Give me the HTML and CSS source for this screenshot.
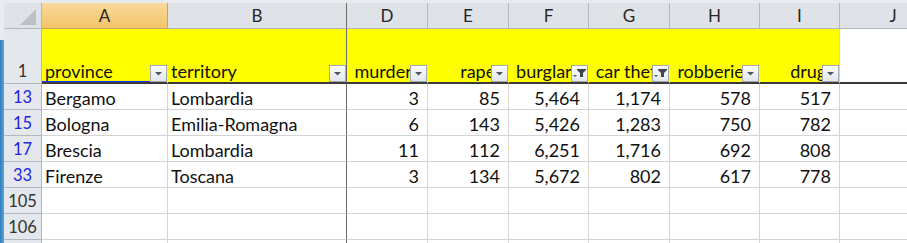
FILE: index.html
```html
<!DOCTYPE html>
<html>
<head>
<meta charset="utf-8">
<link rel="stylesheet" href="styles.css">
</head>
<body>
<div class="sheet">
  <div class="grid">
    <div class="corner"><svg width="37" height="25" viewBox="0 0 37 25"><polygon points="32,6 32,22 16,22" fill="#bcc1c7"/></svg></div>
    <div class="ch sel">A</div>
    <div class="ch fz">B</div>
    <div class="ch">D</div>
    <div class="ch">E</div>
    <div class="ch">F</div>
    <div class="ch">G</div>
    <div class="ch">H</div>
    <div class="ch">I</div>
    <div class="ch">J</div>

    <div class="rh r1">1</div>
    <div class="hc y t act"><span>province</span><span class="fb"><svg width="15" height="15" viewBox="0 0 15 15"><polygon points="4,6 11,6 7.5,9.5" fill="#4d5560"/></svg></span></div>
    <div class="hc y t fz"><span>territory</span><span class="fb"><svg width="15" height="15" viewBox="0 0 15 15"><polygon points="4,6 11,6 7.5,9.5" fill="#4d5560"/></svg></span></div>
    <div class="hc y c"><span>murders</span><span class="fb"><svg width="15" height="15" viewBox="0 0 15 15"><polygon points="4,6 11,6 7.5,9.5" fill="#4d5560"/></svg></span></div>
    <div class="hc y r"><span>rapes</span><span class="fb"><svg width="15" height="15" viewBox="0 0 15 15"><polygon points="4,6 11,6 7.5,9.5" fill="#4d5560"/></svg></span></div>
    <div class="hc y c"><span>burglary</span><span class="fb"><svg width="15" height="15" viewBox="0 0 15 15"><polygon points="5,3 14,3 14,4 11,7 11,11 8,11 8,7 5,4" fill="#3f4650"/><polygon points="1,9 5,9 3,11" fill="#555c66"/></svg></span></div>
    <div class="hc y c"><span>car theft</span><span class="fb"><svg width="15" height="15" viewBox="0 0 15 15"><polygon points="5,3 14,3 14,4 11,7 11,11 8,11 8,7 5,4" fill="#3f4650"/><polygon points="1,9 5,9 3,11" fill="#555c66"/></svg></span></div>
    <div class="hc y c"><span>robberies</span><span class="fb"><svg width="15" height="15" viewBox="0 0 15 15"><polygon points="4,6 11,6 7.5,9.5" fill="#4d5560"/></svg></span></div>
    <div class="hc y r last"><span>drugs</span><span class="fb"><svg width="15" height="15" viewBox="0 0 15 15"><polygon points="4,6 11,6 7.5,9.5" fill="#4d5560"/></svg></span></div>
    <div class="hc"></div>

    <div class="rh f">13</div><div class="d t">Bergamo</div><div class="d t fz">Lombardia</div><div class="d n">3</div><div class="d n">85</div><div class="d n">5,464</div><div class="d n">1,174</div><div class="d n">578</div><div class="d n">517</div><div class="d"></div>
    <div class="rh f">15</div><div class="d t">Bologna</div><div class="d t fz">Emilia-Romagna</div><div class="d n">6</div><div class="d n">143</div><div class="d n">5,426</div><div class="d n">1,283</div><div class="d n">750</div><div class="d n">782</div><div class="d"></div>
    <div class="rh f">17</div><div class="d t">Brescia</div><div class="d t fz">Lombardia</div><div class="d n">11</div><div class="d n">112</div><div class="d n">6,251</div><div class="d n">1,716</div><div class="d n">692</div><div class="d n">808</div><div class="d"></div>
    <div class="rh f">33</div><div class="d t">Firenze</div><div class="d t fz">Toscana</div><div class="d n">3</div><div class="d n">134</div><div class="d n">5,672</div><div class="d n">802</div><div class="d n">617</div><div class="d n">778</div><div class="d"></div>
    <div class="rh">105</div><div class="d"></div><div class="d fz"></div><div class="d"></div><div class="d"></div><div class="d"></div><div class="d"></div><div class="d"></div><div class="d"></div><div class="d"></div>
    <div class="rh">106</div><div class="d"></div><div class="d fz"></div><div class="d"></div><div class="d"></div><div class="d"></div><div class="d"></div><div class="d"></div><div class="d"></div><div class="d"></div>
    <div class="rh"></div><div class="d"></div><div class="d fz"></div><div class="d"></div><div class="d"></div><div class="d"></div><div class="d"></div><div class="d"></div><div class="d"></div><div class="d"></div>
  </div>
</div>
</body>
</html>
```
FILE: styles.css
```css
html, body {
  margin: 0;
  padding: 0;
  background: #ffffff;
  overflow: hidden;
}
body {
  font-family: Lato, "Open Sans", sans-serif;
  width: 907px;
  height: 243px;
}
.sheet {
  padding: 3px 0 0 4px;
  width: 903px;
  height: 240px;
  overflow: hidden;
  background:
    linear-gradient(90deg, #2f7dbd, #5ea6da) no-repeat 0 40px / 4px 100%,
    #e8ebef;
}
.grid {
  display: grid;
  grid-template-columns: 38px 126px 179px 81px 81px 80px 81px 90px 80px 107px;
  grid-template-rows: 26px 55px repeat(6, 26px) 4px;
  background: #ffffff;
}
.grid > div {
  box-sizing: border-box;
  border-right: 1px solid #d4d4d4;
  border-bottom: 1px solid #d4d4d4;
  overflow: hidden;
  white-space: nowrap;
  display: flex;
  align-items: flex-end;
  line-height: 22px;
}
.grid > .corner {
  background: #dfe3e8;
  border-color: #b1b7bf;
  align-items: stretch;
}
.corner svg { display: block; }
.grid > .ch {
  background: #dfe3e8;
  border-right-color: #b1b7bf;
  border-bottom-color: #b1b7bf;
  justify-content: center;
  align-items: center;
  font-size: 17px;
  color: #262626;
  padding-top: 1px;
}
.grid > .ch.sel {
  background: linear-gradient(#f9da9c, #f3c467);
  border-right-color: #c9a264;
  border-bottom-color: #c9a264;
}
.grid > .rh {
  background: #e4e7eb;
  border-right-color: #b1b7bf;
  border-bottom-color: #b1b7bf;
  justify-content: center;
  font-size: 16.5px;
  color: #333333;
  padding-bottom: 1px;
}
.grid > .rh.f { color: #2323e0; }
.grid > .hc {
  position: relative;
  font-size: 18px;
  color: #111111;
  border-bottom: 2px solid #3a3a3a;
}
.grid > .y {
  background: #ffff00;
  border-right-color: #ffff00;
}
.grid > .y.last { border-right-color: #d4d4d4; }
.grid > .act { box-shadow: inset 0 -1px 0 #1a33ff; }
.grid > .fz { border-right-color: #6b6b6b; }
.grid > .d {
  font-size: 18px;
  color: #111111;
}
.grid > .t { padding-left: 3px; }
.grid > .n { justify-content: flex-end; padding-right: 8px; }
.grid > .c { justify-content: center; }
.grid > .r { justify-content: flex-end; padding-right: 5px; }
.fb {
  position: absolute;
  right: 0;
  bottom: 0;
  width: 17px;
  height: 17px;
  box-sizing: border-box;
  border: 1px solid #a3aab3;
  background: linear-gradient(#fdfdfe, #e2e6eb);
}
.fb svg { display: block; }
```
